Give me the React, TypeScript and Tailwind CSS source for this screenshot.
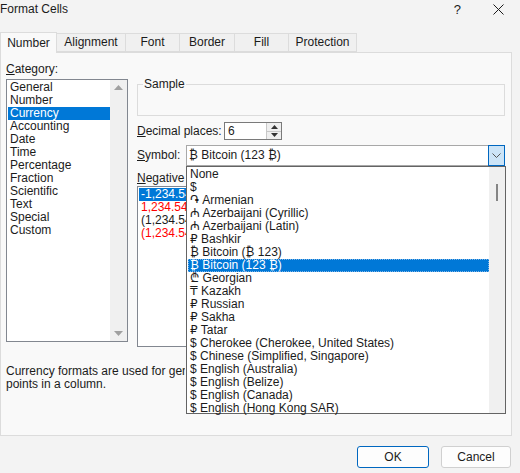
import React from 'react';

const categories = [
  'General', 'Number', 'Currency', 'Accounting', 'Date', 'Time', 'Percentage',
  'Fraction', 'Scientific', 'Text', 'Special', 'Custom',
];

const symbols = [
  'None',
  '$',
  '֏ Armenian',
  '₼ Azerbaijani (Cyrillic)',
  '₼ Azerbaijani (Latin)',
  '₽ Bashkir',
  '₿ Bitcoin (₿ 123)',
  '₿ Bitcoin (123 ₿)',
  '₾ Georgian',
  '₸ Kazakh',
  '₽ Russian',
  '₽ Sakha',
  '₽ Tatar',
  '$ Cherokee (Cherokee, United States)',
  '$ Chinese (Simplified, Singapore)',
  '$ English (Australia)',
  '$ English (Belize)',
  '$ English (Canada)',
  '$ English (Hong Kong SAR)',
];

const negatives = [
  { text: '-1,234.54', red: false },
  { text: '1,234.54', red: true },
  { text: '(1,234.54', red: false },
  { text: '(1,234.54', red: true },
];

const tabs = ['Alignment', 'Font', 'Border', 'Fill', 'Protection'];
const tabWidths = ['w-[69px]', 'w-[54px]', 'w-[55px]', 'w-[54px]', 'w-[68px]'];

function Arrow({ down }: { down?: boolean }) {
  return (
    <svg width="9" height="5" viewBox="0 0 9 5" className={down ? 'rotate-180' : ''}>
      <path d="M0 5 L4.5 0 L9 5 Z" fill="#a0a0a0" />
    </svg>
  );
}

export default function App() {
  return (
    <div className="w-[520px] h-[473px] bg-[#f3f3f3] relative overflow-hidden text-[12px] leading-[13px] text-[#1b1b1b] font-['Liberation_Sans','DejaVu_Sans','Noto_Sans',sans-serif]">
      {/* Title bar */}
      <div className="h-[24px] flex items-center justify-between pr-[16px]">
        <span className="-mt-[6px]">Format Cells</span>
        <div className="flex items-center gap-[32px] -mt-[6px]">
          <span className="text-[13px]">?</span>
          <svg width="11" height="11" viewBox="0 0 11 11">
            <path d="M0.5 0.5 L10.5 10.5 M10.5 0.5 L0.5 10.5" stroke="#1b1b1b" strokeWidth="1" />
          </svg>
        </div>
      </div>

      {/* Tabs */}
      <div className="flex items-end h-[28px]">
        <div className="w-[57px] h-[21px] bg-[#f9f9f9] border border-b-0 border-[#dcdcdc] flex items-center justify-center relative z-10 -mb-px">
          Number
        </div>
        {tabs.map((t, i) => (
          <div
            key={t}
            className={`${tabWidths[i]} h-[19px] bg-[#f0f0f0] border border-l-0 border-[#dcdcdc] flex items-center justify-center`}
          >
            {t}
          </div>
        ))}
      </div>

      {/* Panel */}
      <div className="w-[512px] h-[384px] bg-[#f9f9f9] border border-[#dcdcdc] relative">
        <div className="flex pt-[10px]">
          {/* Category */}
          <div className="w-[122px] ml-[5px] flex flex-col">
            <div className="h-[13px]"><span className="underline">C</span>ategory:</div>
            <div className="mt-[3px] h-[263px] border border-[#828790] bg-white flex">
              <div className="flex-1 pt-[1px] pl-[1px]">
                {categories.map((c) => (
                  <div
                    key={c}
                    className={`h-[13px] pl-[2px] ${c === 'Currency' ? 'bg-[#0078d7] text-white' : ''}`}
                  >
                    {c}
                  </div>
                ))}
              </div>
              <div className="w-[17px] bg-[#f0f0f0] flex flex-col items-center justify-between py-[5px]">
                <Arrow />
                <Arrow down />
              </div>
            </div>
          </div>

          {/* Right column */}
          <div className="ml-[9px] w-[368px] flex flex-col">
            <div className="mt-[21px] h-[32px] border border-[#dcdcdc] relative">
              <span className="absolute -top-[7px] left-[5px] bg-[#f9f9f9] px-px">Sample</span>
            </div>
            <div className="flex items-center h-[18px] mt-[6px]">
              <span className="w-[87px]"><span className="underline">D</span>ecimal places:</span>
              <div className="w-[58px] h-[18px] border border-[#7a7a7a] bg-white flex">
                <span className="flex-1 pl-[3px] leading-[16px]">6</span>
                <div className="w-[15px] flex flex-col border-l border-[#c8c8c8]">
                  <div className="flex-1 flex items-center justify-center bg-[#efefef] border-b border-[#c8c8c8]">
                    <svg width="7" height="4" viewBox="0 0 7 4"><path d="M0 4 L3.5 0 L7 4 Z" fill="#333" /></svg>
                  </div>
                  <div className="flex-1 flex items-center justify-center bg-[#efefef]">
                    <svg width="7" height="4" viewBox="0 0 7 4"><path d="M0 0 L3.5 4 L7 0 Z" fill="#333" /></svg>
                  </div>
                </div>
              </div>
            </div>
            <div className="flex items-center h-[21px] mt-[5px]">
              <span className="w-[49px]"><span className="underline">S</span>ymbol:</span>
              <div className="w-[319px] h-[21px] border border-[#a8a8a8] bg-white flex">
                <span className="flex-1 pl-[2px] leading-[19px]">₿ Bitcoin (123 ₿)</span>
                <div className="w-[17px] bg-[#cce4f7] border border-[#0067c0] flex items-center justify-center -my-px -mr-px">
                  <svg width="9" height="5" viewBox="0 0 9 5">
                    <path d="M0.5 0.5 L4.5 4.5 L8.5 0.5" fill="none" stroke="#555" strokeWidth="1" />
                  </svg>
                </div>
              </div>
            </div>
            <div className="h-[13px] mt-[6px] w-[48px] overflow-hidden whitespace-nowrap">
              <span className="underline">N</span>egative numbers:
            </div>
            <div className="mt-[1px] h-[161px] border border-[#828790] bg-white pt-[1px] pl-[1px]">
              {negatives.map((n, i) => (
                <div
                  key={i}
                  className={`h-[13px] pl-[2px] w-[47px] overflow-hidden whitespace-nowrap ${i === 0 ? 'bg-[#0078d7] text-white' : n.red ? 'text-[#ff0000]' : ''}`}
                >
                  {n.text}
                </div>
              ))}
            </div>
          </div>
        </div>

        <div className="ml-[5px] mt-[18px] w-[505px]">
          <div className="w-[179px] overflow-hidden whitespace-nowrap">
            Currency formats are used for general monetary values. Use Accounting formats to align decimal
          </div>
          <div>points in a column.</div>
        </div>

        {/* Dropdown list overlay */}
        <div className="absolute left-[185px] top-[113px] w-[320px] h-[248px] border border-[#646464] bg-white flex z-20">
          <div className="flex-1 pt-[1px]">
            {symbols.map((s, i) => (
              <div
                key={s}
                className={`h-[13px] pl-[2px] ml-px whitespace-nowrap ${i === 7 ? 'bg-[#0078d7] text-white outline-1 outline-dotted outline-[#7fb4e6] -outline-offset-1' : ''}`}
              >
                {s}
              </div>
            ))}
          </div>
          <div className="w-[16px] bg-[#f0f0f0] flex justify-center pt-[17px]">
            <div className="w-[2px] h-[17px] bg-[#858585]" />
          </div>
        </div>
      </div>

      {/* Buttons */}
      <div className="flex justify-end gap-[12px] pr-[9px] pt-[10px]">
        <button className="w-[72px] h-[22px] rounded-[3px] border border-[#0067c0] bg-[#fdfdfd] text-[12px]">OK</button>
        <button className="w-[70px] h-[22px] rounded-[3px] border border-[#d0d0d0] bg-[#fdfdfd] text-[12px]">Cancel</button>
      </div>
    </div>
  );
}
